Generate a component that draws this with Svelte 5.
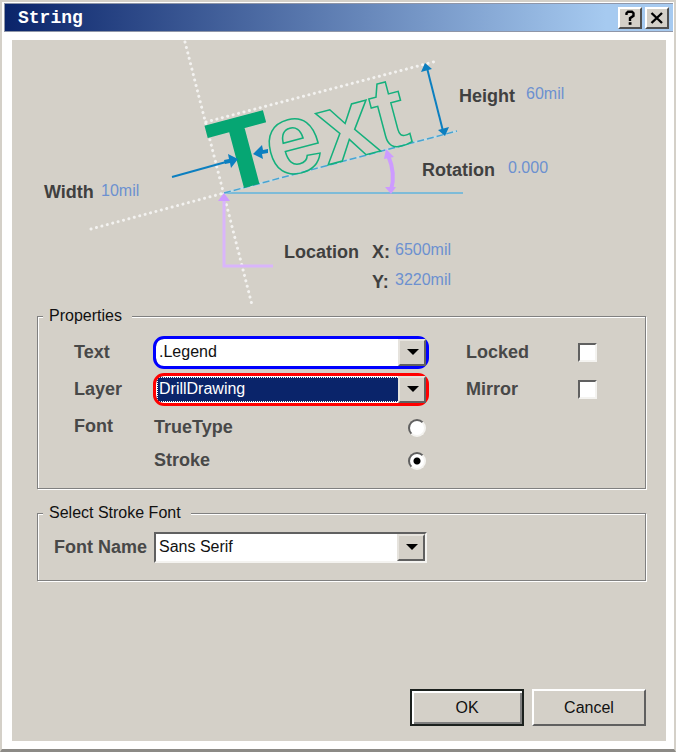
<script>
  let text = $state(".Legend");
  let layer = $state("DrillDrawing");
  let fontKind = $state("stroke");
  let fontName = $state("Sans Serif");
  let locked = $state(false);
  let mirror = $state(false);
</script>

<div class="window">
  <header class="titlebar">
    <h1>String</h1>
    <button class="tool" aria-label="Help">
      <svg viewBox="0 0 16 16" width="16" height="16">
        <path d="M4.5 5V3.2L6 1.8h4l1.5 1.4v2.6L8 8.2V11" fill="none" stroke="#000" stroke-width="2.4" />
        <path d="M6.7 12.2h2.8v2.6H6.7z" />
      </svg>
    </button>
    <button class="tool" aria-label="Close">
      <svg viewBox="0 0 16 16" width="16" height="16">
        <path d="M2.5 3l10.5 10M13 3L2.5 13" fill="none" stroke="#000" stroke-width="2.4" />
      </svg>
    </button>
  </header>

  <main class="panel">
    <svg class="diagram" viewBox="12 40 654 266" width="654" height="266">
      <!-- guides -->
      <g fill="none" stroke="#f3f2f0" stroke-width="3" stroke-linecap="round" stroke-dasharray="0.1 5.5">
        <path d="M185 42L252 305" />
        <path d="M91 229L224 193" />
        <path d="M206 122L437 61" />
      </g>
      <path d="M224 193H463" stroke="#7dbbd8" stroke-width="2" />
      <path d="M224 193L457 131" stroke="#c2dce6" stroke-width="2" />
      <path d="M224 193L457 131" stroke="#4ba3cf" stroke-width="1.5" stroke-dasharray="7 3" />

      <!-- sample word -->
      <text class="sample" transform="translate(222 193) rotate(-14.9)"><tspan class="solid">T</tspan>ext</text>

      <!-- width and height arrows -->
      <g stroke="#0c7fc0" fill="#0c7fc0">
        <path d="M172 177L226 162" stroke-width="2" />
        <path d="M224 160l5-1-1-5 10 5-7 9-1-5-5 1z" stroke="none" />
        <path d="M268 149l-5 1-1-5-9 9 10 5-1-5 6-1z" stroke="none" />
        <path d="M427 68L443 131" stroke-width="2" />
        <path d="M425 63l7 6-11 3zM445 136l-7-6 11-3z" stroke="none" />
      </g>

      <!-- rotation and location arrows -->
      <g stroke="#cd9bff" fill="none">
        <path d="M388 155Q396 174 391 190" stroke-width="4" />
        <path d="M386 149l8 8-10 2zM391 194l-6-7h11z" fill="#cd9bff" stroke="none" />
        <path d="M224 200V266H273" stroke="#d9b5fb" stroke-width="3" />
        <path d="M224 193l6 8h-12z" fill="#cd9bff" stroke="none" />
      </g>

      <g class="name">
        <text x="44" y="198">Width</text>
        <text x="459" y="102">Height</text>
        <text x="422" y="176">Rotation</text>
        <text x="284" y="258">Location</text>
        <text x="372" y="258">X:</text>
        <text x="372" y="288">Y:</text>
      </g>
      <g class="value">
        <text x="101" y="196">10mil</text>
        <text x="526" y="99">60mil</text>
        <text x="508" y="173">0.000</text>
        <text x="395" y="255">6500mil</text>
        <text x="395" y="285">3220mil</text>
      </g>
    </svg>

    <fieldset class="properties">
      <legend>Properties</legend>
      <div class="grid">
        <label class="caption" for="text">Text</label>
        <div class="combo ring blue">
          <select id="text" bind:value={text}>
            <option>.Legend</option>
          </select>
        </div>
        <label class="check">
          Locked
          <input type="checkbox" bind:checked={locked} />
        </label>

        <label class="caption" for="layer">Layer</label>
        <div class="combo ring red">
          <select id="layer" class="active" bind:value={layer}>
            <option>DrillDrawing</option>
          </select>
        </div>
        <label class="check">
          Mirror
          <input type="checkbox" bind:checked={mirror} />
        </label>

        <span class="caption">Font</span>
        <label class="radio">
          TrueType
          <input type="radio" name="kind" value="truetype" bind:group={fontKind} />
        </label>
        <label class="radio second">
          Stroke
          <input type="radio" name="kind" value="stroke" bind:group={fontKind} />
        </label>
      </div>
    </fieldset>

    <fieldset class="stroke-font">
      <legend>Select Stroke Font</legend>
      <div class="line">
        <label class="caption" for="font-name">Font Name</label>
        <div class="combo">
          <select id="font-name" bind:value={fontName}>
            <option>Sans Serif</option>
          </select>
        </div>
      </div>
    </fieldset>

    <footer>
      <button class="push default">OK</button>
      <button class="push">Cancel</button>
    </footer>
  </main>
</div>

<style>
  :global(body) {
    background: #fff;
  }

  .window,
  .window * {
    box-sizing: border-box;
  }

  .window {
    min-height: 100vh;
    display: flex;
    flex-direction: column;
    padding: 1px 1px 1px 2px;
    border: 2px solid #d4d0c8;
    border-bottom: 3px solid #8c8a86;
    background: #fff;
    font-family: "Liberation Sans", sans-serif;
    font-size: 16px;
    color: #111;
  }

  .titlebar {
    display: flex;
    align-items: center;
    height: 29px;
    padding: 0 4px 0 13px;
    gap: 3px;
    border: 1px solid #8f96a8;
    border-right: none;
    background: linear-gradient(to right, #0a246a, #a6caf0 90%);
  }

  h1 {
    flex: 1;
    margin: 0;
    color: #fff;
    font-family: "Liberation Mono", monospace;
    font-size: 18px;
    font-weight: bold;
  }

  .tool {
    display: grid;
    place-items: center;
    width: 24px;
    height: 22px;
    padding: 0;
    border: 2px solid;
    border-color: #fff #505050 #505050 #fff;
    background: #d4d0c8;
  }

  .panel {
    flex: 1;
    display: flex;
    flex-direction: column;
    margin: 8px 7px 7px 8px;
    padding-bottom: 15px;
    background: #d4d0c8;
  }

  .diagram {
    display: block;
    max-width: 100%;
  }

  .sample {
    font-family: "Liberation Sans", sans-serif;
    font-size: 100px;
    font-weight: bold;
    fill: none;
    stroke: #14b07c;
    stroke-width: 1.5px;
  }

  .solid {
    fill: #06a673;
    stroke: #06a673;
  }

  .name,
  .caption,
  .check,
  .radio {
    font-size: 18px;
    font-weight: bold;
    fill: #404040;
    color: #484848;
  }

  .value {
    fill: #6c90d0;
  }

  fieldset {
    min-width: 0;
    margin: 0 20px 0 25px;
    border: 1px solid #808080;
    box-shadow: 1px 1px 0 #fff, inset 1px 1px 0 #fff;
  }

  legend {
    height: 20px;
    padding: 0 10px 0 6px;
    line-height: 20px;
    background: #d4d0c8;
  }

  .properties {
    padding: 11px 48px 11px 36px;
  }

  .properties legend {
    margin-left: -31px;
  }

  .grid {
    display: grid;
    grid-template-columns: 80px 1fr 169px;
    grid-template-rows: 37px 37px 33px 33px;
    align-items: start;
  }

  .caption {
    line-height: 30px;
  }

  .check,
  .radio {
    display: flex;
    align-items: center;
    justify-content: space-between;
    height: 30px;
  }

  .check {
    padding-left: 38px;
  }

  .radio {
    height: 33px;
    padding-right: 2px;
  }

  .second {
    grid-column: 2;
  }

  .stroke-font {
    margin-top: 14px;
    padding: 9px 218px 17px 16px;
  }

  .stroke-font legend {
    margin-left: -11px;
  }

  .line {
    display: grid;
    grid-template-columns: 100px 1fr;
  }

  .combo {
    position: relative;
    height: 31px;
    padding: 1px;
    border: 2px solid;
    border-color: #606060 #f4f3f0 #f4f3f0 #606060;
    background: #fff;
  }

  select {
    appearance: none;
    display: block;
    width: calc(100% - 23px);
    height: 25px;
    padding: 0 0 2px 2px;
    border: none;
    border-radius: 0;
    outline: none;
    background: #fff;
    color: #111;
    font: inherit;
  }

  select.active {
    outline: 1px dotted #fff;
    outline-offset: -1px;
    background: #0a246a;
    color: #fff;
  }

  .combo::before {
    content: "";
    position: absolute;
    top: 0;
    right: 0;
    bottom: 0;
    width: 24px;
    border: 2px solid;
    border-color: #e6e3dd #606060 #606060 #e6e3dd;
    background: #d4d0c8;
    pointer-events: none;
  }

  .combo::after {
    content: "";
    position: absolute;
    top: 10px;
    right: 7px;
    border: 6px solid transparent;
    border-top-color: #000;
    border-bottom: none;
    pointer-events: none;
  }

  /* coloured highlight round a combo */
  .ring {
    outline: 3px solid;
    outline-offset: -2px;
    border-radius: 10px;
  }

  .blue {
    outline-color: #00f;
  }

  .red {
    outline-color: #f00;
  }

  input {
    appearance: none;
    width: 19px;
    height: 19px;
    margin: 0;
    border: 2px solid;
    border-color: #606060 #f4f3f0 #f4f3f0 #606060;
    background: #fff;
  }

  input[type="checkbox"]:checked {
    background: #404040;
  }

  input[type="radio"] {
    width: 18px;
    height: 18px;
    border-radius: 50%;
  }

  input[type="radio"]:checked {
    background: radial-gradient(circle, #000 3px, #fff 4px);
  }

  footer {
    display: flex;
    justify-content: flex-end;
    gap: 8px;
    margin-top: auto;
    padding: 15px 20px 0;
  }

  .push {
    width: 114px;
    height: 37px;
    padding: 0;
    border: 2px solid;
    border-color: #fff #606060 #606060 #fff;
    background: #d4d0c8;
    color: #111;
    font: inherit;
  }

  .default {
    border: 2px solid #1c211e;
    box-shadow: inset 2px 2px 0 #fff, inset -2px -2px 0 #808080;
  }
</style>
